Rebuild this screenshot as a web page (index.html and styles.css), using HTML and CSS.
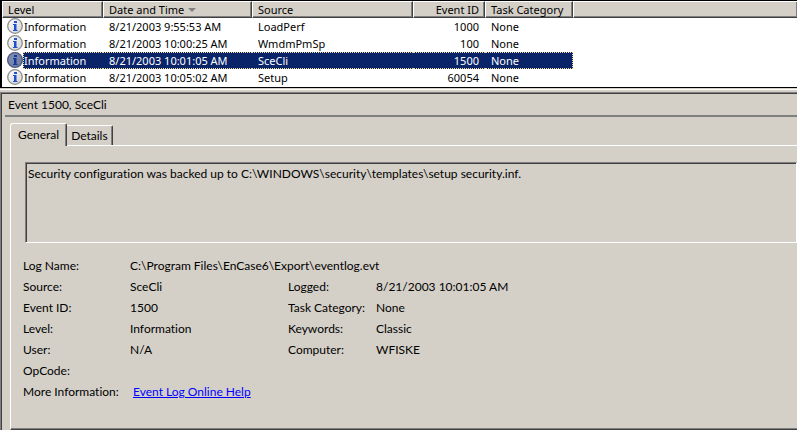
FILE: index.html
```html
<!DOCTYPE html>
<html lang="en">
<head>
    <meta charset="UTF-8">
    <meta name="viewport" content="width=device-width, initial-scale=1.0">
    <link rel="stylesheet" href="styles.css">
    <title>Event Viewer</title>
</head>
<body>
    <svg width="0" height="0" class="defs">
        <defs>
            <linearGradient id="rim" x1="0" y1="0" x2="1" y2="1">
                <stop offset="0" stop-color="#ffffff"/>
                <stop offset="1" stop-color="#d0d0d0"/>
            </linearGradient>
        </defs>
        <symbol id="info" viewBox="0 0 16 16">
            <circle cx="8" cy="8" r="7.3" fill="url(#rim)" stroke="#8c8c8c" stroke-width="1.3"/>
            <rect x="7" y="3" width="3" height="2" fill="#2050d0"/>
            <path d="M6 6H9.5V12H10.5V13H6V12H7V7H6Z" fill="#2050d0"/>
        </symbol>
    </svg>

    <div class="list">
        <table>
            <colgroup>
                <col class="col-level">
                <col class="col-date">
                <col class="col-source">
                <col class="col-id">
                <col class="col-task">
                <col>
            </colgroup>
            <thead>
                <tr>
                    <th><button type="button">Level</button></th>
                    <th><button type="button">Date and Time<span class="arrow"></span></button></th>
                    <th><button type="button">Source</button></th>
                    <th><button type="button" class="right">Event ID</button></th>
                    <th><button type="button">Task Category</button></th>
                    <th class="rest"></th>
                </tr>
            </thead>
            <tbody>
                <tr>
                    <td class="level"><div><svg><use href="#info"/></svg><span>Information</span></div></td>
                    <td>8/21/2003 9:55:53 AM</td>
                    <td>LoadPerf</td>
                    <td class="num">1000</td>
                    <td>None</td>
                    <td class="rest"></td>
                </tr>
                <tr>
                    <td class="level"><div><svg><use href="#info"/></svg><span>Information</span></div></td>
                    <td>8/21/2003 10:00:25 AM</td>
                    <td>WmdmPmSp</td>
                    <td class="num">100</td>
                    <td>None</td>
                    <td class="rest"></td>
                </tr>
                <tr class="selected">
                    <td class="level"><div><svg><use href="#info"/><circle class="tint" cx="8" cy="8" r="8"/></svg><span>Information</span></div></td>
                    <td>8/21/2003 10:01:05 AM</td>
                    <td>SceCli</td>
                    <td class="num">1500</td>
                    <td class="last">None</td>
                    <td class="rest"></td>
                </tr>
                <tr>
                    <td class="level"><div><svg><use href="#info"/></svg><span>Information</span></div></td>
                    <td>8/21/2003 10:05:02 AM</td>
                    <td>Setup</td>
                    <td class="num">60054</td>
                    <td>None</td>
                    <td class="rest"></td>
                </tr>
            </tbody>
        </table>
    </div>

    <div class="preview">
        <h1>Event 1500, SceCli</h1>
        <div class="tabs" role="tablist">
            <button type="button" class="tab active" role="tab" aria-selected="true">General</button>
            <button type="button" class="tab" role="tab" aria-selected="false">Details</button>
        </div>
        <div class="panel" role="tabpanel">
            <textarea class="message" aria-label="Description" readonly>Security configuration was backed up to C:\WINDOWS\security\templates\setup security.inf.</textarea>
            <dl>
                <dt>Log Name:</dt><dd class="wide">C:\Program Files\EnCase6\Export\eventlog.evt</dd>
                <dt>Source:</dt><dd>SceCli</dd>
                <dt>Logged:</dt><dd>8/21/2003 10:01:05 AM</dd>
                <dt>Event ID:</dt><dd>1500</dd>
                <dt>Task Category:</dt><dd>None</dd>
                <dt>Level:</dt><dd>Information</dd>
                <dt>Keywords:</dt><dd>Classic</dd>
                <dt>User:</dt><dd>N/A</dd>
                <dt>Computer:</dt><dd>WFISKE</dd>
                <dt>OpCode:</dt><dd class="wide"></dd>
                <dt>More Information:</dt><dd class="wide help"><a href="#">Event Log Online Help</a></dd>
            </dl>
        </div>
    </div>
</body>
</html>
```

FILE: styles.css
```css
* {
    box-sizing: border-box;
}

body {
    margin: 0;
    background: #d4d0c8;
    color: #000;
    font-family: Lato, "Open Sans", sans-serif;
    font-size: 12px;
    font-variant-ligatures: none;
}

.defs {
    position: absolute;
}

/* event list */
.list {
    background: #fff;
    border: 1px solid #000;
    border-width: 1px 0 1px 2px;
    padding-bottom: 1px;
    font-family: "Noto Sans", "Open Sans", sans-serif;
    font-size: 11px;
}

table {
    width: 100%;
    table-layout: fixed;
    border-collapse: separate;
    border-spacing: 0;
}

.col-level {
    width: 101px;
}

.col-date {
    width: 149px;
}

.col-source {
    width: 161px;
}

.col-id {
    width: 72px;
}

.col-task {
    width: 88px;
}

th {
    padding: 0;
    height: 17px;
}

th button,
th.rest {
    background: #d4d0c8;
    border: 1px solid;
    border-color: #fff #404040 #404040 #fff;
    box-shadow: inset -1px -1px #808080;
}

th button {
    display: flex;
    align-items: center;
    width: 100%;
    height: 17px;
    padding: 0 5px;
    font: inherit;
    font-weight: normal;
    line-height: 15px;
    color: #000;
}

th button.right {
    justify-content: flex-end;
}

th.rest {
    border-right: 0;
}

.arrow {
    margin-left: 4px;
    border: 4px solid transparent;
    border-top-color: #808080;
    border-bottom: 0;
}

td {
    height: 17px;
    padding: 0 6px;
    line-height: 15px;
    white-space: nowrap;
    border: 0 dotted transparent;
    border-width: 1px 0;
}

.num {
    text-align: right;
}

td.level {
    padding: 0;
    border: 0;
}

.level div {
    display: flex;
    height: 17px;
    padding-left: 5px;
}

.level svg {
    width: 16px;
    height: 16px;
}

.level span {
    flex: 1;
    padding-left: 1px;
    line-height: 17px;
}

.tint {
    fill: #0a246a;
    opacity: 0.5;
}

.selected td:not(.level):not(.rest),
.selected span {
    background: #0a246a;
    color: #fff;
    border: 0 dotted #f5db95;
    border-width: 1px 0;
    line-height: 15px;
}

.selected .level span {
    border-left-width: 1px;
    padding-left: 0;
    line-height: 15px;
}

.selected td.last:not(.rest) {
    border-right-width: 1px;
}

/* preview pane */
.preview {
    margin-top: 4px;
    border: 1px solid #808080;
    border-width: 1px 0 0 1px;
    box-shadow: inset 1px 1px #404040, 0 -2px #d4d0c8, 0 -3px #fff;
    padding: 2px 0 0 4px;
}

h1 {
    margin: 0;
    padding-left: 3px;
    border-bottom: 2px solid #808080;
    font-size: 12px;
    font-weight: normal;
    line-height: 20px;
}

.tabs {
    display: flex;
    align-items: flex-end;
    padding: 6px 0 0 5px;
}

.tab {
    height: 20px;
    padding: 0 4px;
    background: #d4d0c8;
    border: 1px solid #fff;
    border-right-color: #404040;
    border-bottom: 0;
    border-left: 0;
    border-radius: 0 2px 0 0;
    box-shadow: inset -1px 0 #808080;
    font: inherit;
    color: #000;
}

.tab.active {
    height: 23px;
    margin-bottom: -1px;
    padding: 0 7px 2px;
    border-left: 1px solid #fff;
    border-radius: 3px 2px 0 0;
    z-index: 1;
}

.panel {
    margin-left: 5px;
    padding: 16px 0 27px 12px;
    border-top: 1px solid #fff;
    border-left: 1px solid #fff;
    border-bottom: 1px solid #404040;
    box-shadow: inset 0 -1px #808080;
}

.message {
    display: block;
    width: calc(100% - 2px);
    height: 81px;
    margin-left: 2px;
    padding: 1px 2px;
    background: #d4d0c8;
    border: 1px solid;
    border-color: #808080 #fff #fff #808080;
    border-radius: 0;
    box-shadow: inset 1px 1px #404040;
    outline: 0;
    resize: none;
    font: inherit;
    line-height: 19px;
    color: #000;
}

dl {
    display: grid;
    grid-template-columns: 107px 158px 88px 1fr;
    margin: 12px 0 0;
    line-height: 21px;
    white-space: nowrap;
}

dl > * {
    min-height: 21px;
}

dd {
    margin: 0;
}

dd.wide {
    grid-column: 2 / -1;
}

.help {
    padding-left: 3px;
}

a {
    color: #00f;
}
```
